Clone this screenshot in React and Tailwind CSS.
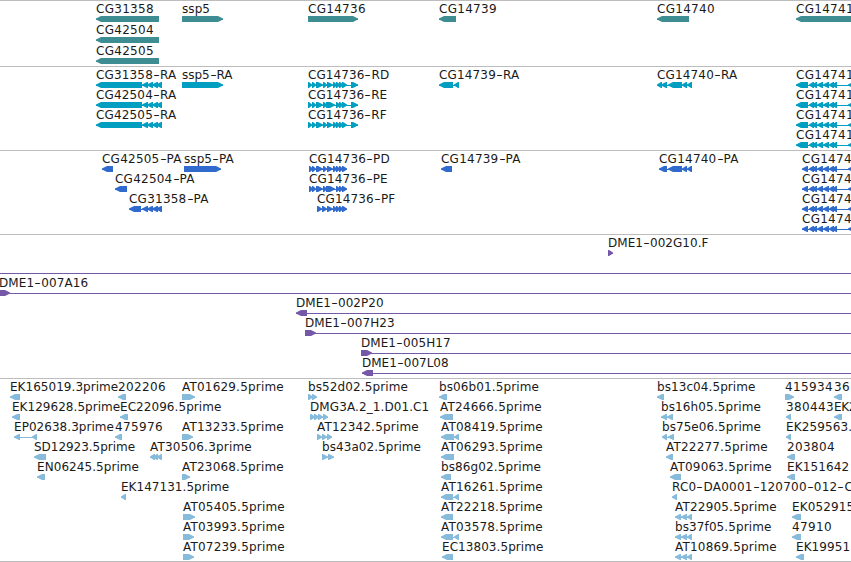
// Advance width in px of each glyph on the map, anything missing is a digit (8)
const advances = {
  A: 8.6, C: 8.4, D: 9, E: 7, F: 6.5, G: 9.4, H: 9, K: 7.2, L: 6, M: 9.6, N: 9, O: 9, P: 7, R: 7.4, S: 6, T: 8.2,
  b: 8, s: 6, d: 8, g: 8, h: 8, c: 6.5, e: 7, f: 4.5, a: 7, p: 8, r: 5, i: 3, m: 11,
  '.': 4, '-': 7, '_': 5.5,
}

const ctx = document.createElement('canvas').getContext('2d')
ctx.font = '12px "DejaVu Sans"'
ctx.fontKerning = 'none'

const tracking = (text) => {
  const chars = [...text].filter((c) => c !== '-')
  const wanted = chars.reduce((sum, c) => sum + (advances[c] ?? 8), 0)
  const natural = chars.reduce((sum, c) => sum + ctx.measureText(c).width, 0)
  return (wanted - natural) / chars.length
}

// f(label, direction, exons, end of the connecting line)
const f = (label, dir, exons, lineEnd) => ({ label, dir, exons, lineEnd })

const raTail = [[142, 148], [147, 153], [152, 158], [156, 162]]
const g14736 = [[312, 316], [316, 323], [323, 327], [327, 333], [333, 337], [336, 340], [339, 343], [342, 347]]
const g14736e = [[312, 316], [316, 323], [323, 327], [326, 335], [336, 340], [339, 343], [342, 347]]
const pf = [[317, 322], [322, 327], [327, 333], [333, 337], [336, 340], [339, 343], [342, 347]]
const g14740 = [[668, 682], [682, 687], [687, 692]]
const g14741 = [[809, 814], [812, 817], [817, 823], [823, 829], [829, 834], [832, 837], [848, 854]]
const ra41 = f('CG14741', 'l', [[796, 808], ...g14741])
const pa41 = f('CG1474', 'l', [[802, 808], ...g14741])

const tracks = [
  {
    name: 'genes',
    color: 'fill-[#3d8d93]',
    height: 'h-[66px]',
    row: 'h-[21px]',
    rows: [
      [
        f('CG31358', 'l', [[96, 159]]),
        f('ssp5', 'r', [[182, 223]]),
        f('CG14736', 'r', [[308, 358]]),
        f('CG14739', 'l', [[439, 456]]),
        f('CG14740', 'l', [[657, 689]]),
        f('CG14741', 'l', [[796, 860]]),
      ],
      [f('CG42504', 'l', [[96, 159]])],
      [f('CG42505', 'l', [[96, 159]])],
    ],
  },
  {
    name: 'transcripts',
    color: 'fill-[#009fc2]',
    height: 'h-[84px]',
    row: 'h-5',
    rows: [
      [
        f('CG31358-RA', 'l', [[96, 142], ...raTail]),
        f('ssp5-RA', 'r', [[182, 223]]),
        f('CG14736-RD', 'r', [[308, 312], ...g14736, [351, 358]]),
        f('CG14739-RA', 'l', [[439, 453], [454, 459]]),
        f('CG14740-RA', 'l', [[657, 662], [661, 667], ...g14740]),
        ra41,
      ],
      [
        f('CG42504-RA', 'l', [[96, 142], ...raTail]),
        f('CG14736-RE', 'r', [[308, 312], ...g14736e, [351, 358]]),
        ra41,
      ],
      [
        f('CG42505-RA', 'l', [[96, 142], ...raTail]),
        f('CG14736-RF', 'r', [[308, 312], ...g14736, [351, 358]]),
        ra41,
      ],
      [ra41],
    ],
  },
  {
    name: 'proteins',
    color: 'fill-[#306acc]',
    height: 'h-[84px]',
    row: 'h-5',
    rows: [
      [
        f('CG42505-PA', 'l', [[102, 113]]),
        f('ssp5-PA', 'r', [[184, 221]]),
        f('CG14736-PD', 'r', [[309, 313], ...g14736]),
        f('CG14739-PA', 'l', [[441, 452]]),
        f('CG14740-PA', 'l', [[659, 667], ...g14740]),
        pa41,
      ],
      [f('CG42504-PA', 'l', [[115, 127]]), f('CG14736-PE', 'r', [[309, 313], ...g14736e]), pa41],
      [f('CG31358-PA', 'l', [[129, 141], ...raTail]), f('CG14736-PF', 'r', pf), pa41],
      [pa41],
    ],
  },
  {
    name: 'bacs',
    color: 'fill-[#7658a8]',
    height: 'h-[144px]',
    row: 'h-5',
    rows: [
      [f('DME1-002G10.F', 'r', [[608, 613]])],
      [f('', 'r', [[-1, -1]], 851)],
      [f('DME1-007A16', 'r', [[-1, 10]], 851)],
      [f('DME1-002P20', 'l', [[296, 307]], 851)],
      [f('DME1-007H23', 'r', [[305, 316]], 851)],
      [f('DME1-005H17', 'r', [[361, 372]], 851)],
      [f('DME1-007L08', 'l', [[362, 373]], 851)],
    ],
  },
  {
    name: 'ests',
    color: 'fill-[#86bbdc]',
    height: 'h-[183px]',
    row: 'h-5',
    rows: [
      [
        f('EK165019.3prime', 'l', [[10, 20]]),
        f('202206', 'l', [[118, 126]]),
        f('AT01629.5prime', 'r', [[182, 195]]),
        f('bs52d02.5prime', 'r', [[308, 313], [312, 317]]),
        f('bs06b01.5prime', 'l', [[439, 447]]),
        f('bs13c04.5prime', 'l', [[657, 664]]),
        f('415934', 'r', [[785, 794]]),
        f('36', 'l', [[834, 842]]),
      ],
      [
        f('EK129628.5prime', 'l', [[12, 20]]),
        f('EC22096.5prime', 'l', [[120, 128]]),
        f('DMG3A.2_1.D01.C1', 'r', [[310, 315], [314, 319], [318, 323], [323, 328]]),
        f('AT24666.5prime', 'l', [[440, 453]]),
        f('bs16h05.5prime', 'l', [[661, 667], [667, 673]]),
        f('380443', 'l', [[786, 791]]),
        f('EK2', 'l', [[834, 842]]),
      ],
      [
        f('EP02638.3prime', 'l', [[14, 20], [32, 37]]),
        f('475976', 'l', [[115, 122]]),
        f('AT13233.5prime', 'r', [[182, 193]]),
        f('AT12342.5prime', 'r', [[317, 322], [322, 327], [327, 332]]),
        f('AT08419.5prime', 'l', [[441, 454], [454, 459]]),
        f('bs75e06.5prime', 'l', [[662, 667], [668, 674]]),
        f('EK259563.', 'l', [[786, 791]]),
      ],
      [
        f('SD12923.5prime', 'l', [[34, 46]]),
        f('AT30506.3prime', 'l', [[150, 155], [153, 158], [157, 162]]),
        f('bs43a02.5prime', 'r', [[322, 328], [328, 334]]),
        f('AT06293.5prime', 'l', [[441, 454]]),
        f('AT22277.5prime', 'l', [[666, 673]]),
        f('203804', 'l', [[787, 795]]),
      ],
      [
        f('EN06245.5prime', 'l', [[37, 45]]),
        f('AT23068.5prime', 'r', [[182, 190]]),
        f('bs86g02.5prime', 'l', [[441, 451]]),
        f('AT09063.5prime', 'l', [[670, 681]]),
        f('EK151642', 'l', [[787, 795]]),
      ],
      [
        f('EK147131.5prime', 'l', [[121, 126]]),
        f('AT16261.5prime', 'l', [[441, 453], [454, 459]]),
        f('RC0-DA0001-120700-012-C', 'l', [[672, 677]]),
      ],
      [
        f('AT05405.5prime', 'r', [[183, 195]]),
        f('AT22218.5prime', 'l', [[441, 453]]),
        f('AT22905.5prime', 'l', [[675, 681], [681, 687], [687, 692]]),
        f('EK052915', 'l', [[792, 801]]),
      ],
      [
        f('AT03993.5prime', 'r', [[183, 194]]),
        f('AT03578.5prime', 'l', [[441, 453], [454, 459]]),
        f('bs37f05.5prime', 'l', [[675, 681], [681, 687], [687, 692]]),
        f('47910', 'l', [[792, 801]]),
      ],
      [
        f('AT07239.5prime', 'r', [[183, 194]]),
        f('EC13803.5prime', 'l', [[442, 453]]),
        f('AT10869.5prime', 'l', [[675, 681], [681, 687], [687, 692]]),
        f('EK19951', 'l', [[796, 804]]),
      ],
    ],
  },
]

const arrow = (a, b, dir) => {
  const head = Math.min(5, b - a - 1)
  if (dir === 'l') {
    return `M${a} 3.5V2.5L${a + head} 0H${b}V6H${a + head}Z`
  }
  return `M${b} 3.5V2.5L${b - head} 0H${a}V6H${b - head}Z`
}

const Label = ({ text }) => (
  <span className="block h-[15px] leading-[17px]" style={{ letterSpacing: `${tracking(text)}px` }}>
    {text.split(/(-)/).map((part, i) =>
      part === '-' ? (
        <span key={i} className="inline-block w-[7px] scale-x-150 text-center tracking-normal">-</span>
      ) : (
        part
      )
    )}
  </span>
)

const Feature = ({ label, dir, exons, lineEnd }) => {
  const start = exons[0][0]
  const end = lineEnd ?? exons[exons.length - 1][1]
  return (
    <div className="col-start-1 row-start-1 justify-self-start" style={{ marginLeft: start }}>
      <Label text={label} />
      <svg className="block max-w-none" width={end - start} height="6">
        <rect x="0" y="3" width={end - start} height="1" />
        {exons.map(([a, b]) => b > a && <path key={a} d={arrow(a - start, b - start, dir)} />)}
      </svg>
    </div>
  )
}

const Track = ({ color, height, row, rows }) => (
  <section className={`border-t border-[#bdbdbd] ${height} ${color}`}>
    {rows.map((features, i) => (
      <div key={i} className={`grid grid-cols-1 ${row}`}>
        {features.map((feature) => (
          <Feature key={feature.label + feature.exons[0][0]} {...feature} />
        ))}
      </div>
    ))}
  </section>
)

const App = () => {
  return (
    <main className="h-[562px] w-[851px] overflow-hidden whitespace-nowrap border-b border-[#bdbdbd] bg-white font-['DejaVu_Sans',sans-serif] text-[12px] text-[#1a1a1a]">
      {tracks.map((track) => (
        <Track key={track.name} {...track} />
      ))}
    </main>
  )
}

export default App
